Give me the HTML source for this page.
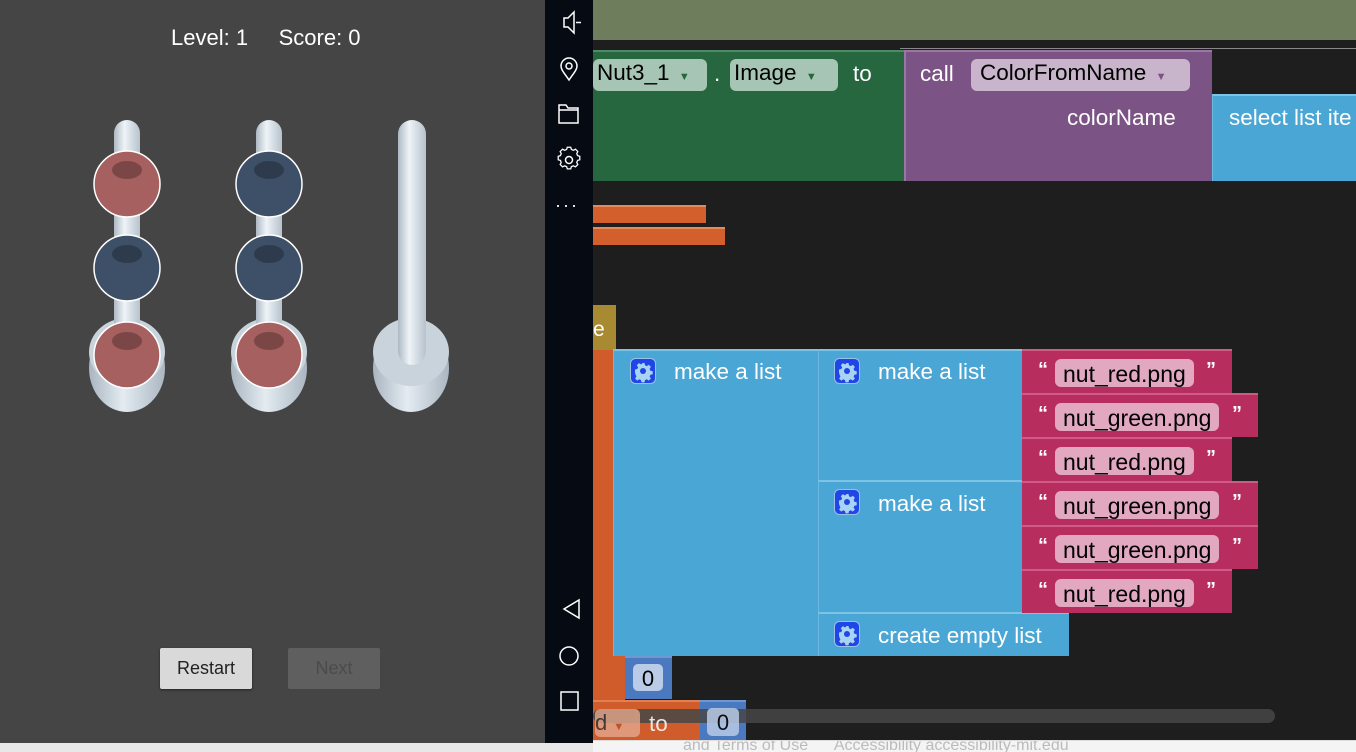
<!DOCTYPE html>
<html><head><meta charset="utf-8"><style>
*{margin:0;padding:0;box-sizing:border-box}
body{width:1356px;height:752px;overflow:hidden;background:#1e1e1e;font-family:"Liberation Sans",Arial,sans-serif;position:relative}
.a{position:absolute}
.t{color:#fff;font-size:22.5px;white-space:nowrap}
.dd{position:absolute;border-radius:6px;color:#000;font-size:22.5px;padding-left:4px;line-height:28px;white-space:nowrap}
.blue{background:#4aa6d5;border-top:2px solid #7cc3e6;border-left:1px solid #6bb8e0}
.pink{background:#b72d5e;border-top:2px solid #cf5a85}
.pin{position:absolute;left:33px;top:8px;height:28px;background:#e1a8bf;border-radius:6px;font-size:23px;line-height:30px;padding:0 8px;color:#000;white-space:nowrap}
.q{position:absolute;color:#fff;font-size:20px;top:8px;font-weight:bold}
.gear{position:absolute;width:26px;height:26px}
</style></head><body>
<svg width="0" height="0" style="position:absolute"><defs>
<symbol id="g" viewBox="0 0 26 26"><rect x=".5" y=".5" width="25" height="25" rx="5" fill="#1f46e6" stroke="#9cc0e8"/>
<path d="M11.5 5h3l.5 2.3 1.8.8 2-1.3 2.1 2.1-1.3 2 .8 1.8 2.3.5v3l-2.3.5-.8 1.8 1.3 2-2.1 2.1-2-1.3-1.8.8-.5 2.3h-3l-.5-2.3-1.8-.8-2 1.3-2.1-2.1 1.3-2-.8-1.8L5 14.5v-3l2.3-.5.8-1.8-1.3-2 2.1-2.1 2 1.3 1.8-.8z" fill="#a9d3f2"/><circle cx="13" cy="13" r="3" fill="#1f46e6"/></symbol>
</defs></svg>
<!-- left panel -->
<div class="a" style="left:0;top:0;width:545px;height:752px;background:#454545"></div>
<div class="a t" style="left:171px;top:25px;font-size:22px">Level: 1&nbsp;&nbsp;&nbsp;&nbsp;&nbsp;Score: 0</div>
<svg class="a" style="left:0;top:0" width="545" height="460">
<defs>
<linearGradient id="rod" x1="0" x2="1"><stop offset="0" stop-color="#aeb8c4"/><stop offset=".4" stop-color="#eef4f8"/><stop offset="1" stop-color="#b7c2cc"/></linearGradient>
<linearGradient id="base" x1="0" x2="1"><stop offset="0" stop-color="#a9b5c0"/><stop offset=".45" stop-color="#e4ecf2"/><stop offset="1" stop-color="#aab6c1"/></linearGradient>
</defs>
<g>
<ellipse cx="127" cy="368" rx="38" ry="44" fill="url(#base)"/>
<ellipse cx="127" cy="352" rx="38" ry="34" fill="#c9d3dc"/>
<rect x="114" y="120" width="26" height="230" rx="13" fill="url(#rod)"/>
</g>
<g>
<ellipse cx="269" cy="368" rx="38" ry="44" fill="url(#base)"/>
<ellipse cx="269" cy="352" rx="38" ry="34" fill="#c9d3dc"/>
<rect x="256" y="120" width="26" height="230" rx="13" fill="url(#rod)"/>
</g>
<g>
<ellipse cx="411" cy="368" rx="38" ry="44" fill="url(#base)"/>
<ellipse cx="411" cy="352" rx="38" ry="34" fill="#c9d3dc"/>
<rect x="398" y="120" width="28" height="245" rx="14" fill="url(#rod)"/>
</g>
<g stroke="#fff" stroke-width="1.5">
<circle cx="127" cy="184" r="33" fill="#a5605f"/>
<circle cx="127" cy="268" r="33" fill="#3d5068"/>
<circle cx="127" cy="355" r="33" fill="#a5605f"/>
<circle cx="269" cy="184" r="33" fill="#3d5068"/>
<circle cx="269" cy="268" r="33" fill="#3d5068"/>
<circle cx="269" cy="355" r="33" fill="#a5605f"/>
</g>
<g fill="#000" opacity=".25">
<ellipse cx="127" cy="170" rx="15" ry="9"/><ellipse cx="127" cy="254" rx="15" ry="9"/><ellipse cx="127" cy="341" rx="15" ry="9"/>
<ellipse cx="269" cy="170" rx="15" ry="9"/><ellipse cx="269" cy="254" rx="15" ry="9"/><ellipse cx="269" cy="341" rx="15" ry="9"/>
</g>
</svg>
<div class="a" style="left:160px;top:648px;width:92px;height:41px;background:#d8d9d8;border-radius:2px;box-shadow:0 1px 2px #222;font-size:18px;line-height:41px;text-align:center;color:#222">Restart</div>
<div class="a" style="left:288px;top:648px;width:92px;height:41px;background:#5f5f5f;border-radius:2px;font-size:18px;line-height:41px;text-align:center;color:#4b4b4b">Next</div>

<!-- workspace -->
<div class="a" style="left:593px;top:0;width:763px;height:40px;background:#6e7d5b"></div>
<div class="a" style="left:900px;top:48px;width:456px;height:1px;background:#888"></div>
<div class="a" style="left:593px;top:50px;width:312px;height:131px;background:#266740;border-top:2px solid #4f8a66"></div>
<div class="dd" style="left:593px;top:59px;width:114px;background:#a6c5b4">Nut3_1 <span style="font-size:11px;color:#266740">&nbsp;▼</span></div>
<div class="a t" style="left:714px;top:61px">.</div>
<div class="dd" style="left:730px;top:59px;width:108px;background:#a6c5b4">Image <span style="font-size:11px;color:#266740">&nbsp;▼</span></div>
<div class="a t" style="left:853px;top:61px">to</div>
<div class="a" style="left:904px;top:50px;width:308px;height:131px;background:#7b5385;border-top:2px solid #9a76a3;border-left:2px solid #9a76a3"></div>
<div class="a t" style="left:920px;top:61px">call</div>
<div class="dd" style="left:971px;top:59px;width:219px;background:#c8b4cb;padding-left:9px">ColorFromName <span style="font-size:11px;color:#7b5385">&nbsp;▼</span></div>
<div class="a t" style="left:1067px;top:105px">colorName</div>
<div class="a blue" style="left:1212px;top:94px;width:144px;height:87px"></div>
<div class="a t" style="left:1229px;top:105px">select list ite</div>
<div class="a" style="left:593px;top:205px;width:113px;height:18px;background:#d35f2c;border-top:2px solid #e58a5f"></div>
<div class="a" style="left:593px;top:227px;width:132px;height:18px;background:#d35f2c;border-top:2px solid #e58a5f"></div>
<div class="a" style="left:593px;top:305px;width:23px;height:46px;background:#a88a33;color:#fff;font-size:21px;line-height:50px">e</div>
<div class="a" style="left:593px;top:350px;width:21px;height:310px;background:#cf5c2a"></div>
<div class="a blue" style="left:613px;top:349px;width:206px;height:307px"></div>
<svg class="gear" style="left:630px;top:358px"><use href="#g"/></svg>
<div class="a t" style="left:674px;top:359px">make a list</div>
<div class="a blue" style="left:818px;top:349px;width:205px;height:132px"></div>
<svg class="gear" style="left:834px;top:358px"><use href="#g"/></svg>
<div class="a t" style="left:878px;top:359px">make a list</div>
<div class="a blue" style="left:818px;top:480px;width:205px;height:133px"></div>
<svg class="gear" style="left:834px;top:489px"><use href="#g"/></svg>
<div class="a t" style="left:878px;top:491px">make a list</div>
<div class="a blue" style="left:818px;top:612px;width:251px;height:44px"></div>
<svg class="gear" style="left:834px;top:621px"><use href="#g"/></svg>
<div class="a t" style="left:878px;top:623px">create empty list</div>
<div class="a pink" style="left:1022px;top:349px;width:210px;height:44px"><span class="q" style="left:16px">“</span><span class="pin">nut_red.png</span><span class="q" style="left:184px">”</span></div>
<div class="a pink" style="left:1022px;top:393px;width:236px;height:44px"><span class="q" style="left:16px">“</span><span class="pin">nut_green.png</span><span class="q" style="left:210px">”</span></div>
<div class="a pink" style="left:1022px;top:437px;width:210px;height:44px"><span class="q" style="left:16px">“</span><span class="pin">nut_red.png</span><span class="q" style="left:184px">”</span></div>
<div class="a pink" style="left:1022px;top:481px;width:236px;height:44px"><span class="q" style="left:16px">“</span><span class="pin">nut_green.png</span><span class="q" style="left:210px">”</span></div>
<div class="a pink" style="left:1022px;top:525px;width:236px;height:44px"><span class="q" style="left:16px">“</span><span class="pin">nut_green.png</span><span class="q" style="left:210px">”</span></div>
<div class="a pink" style="left:1022px;top:569px;width:210px;height:44px"><span class="q" style="left:16px">“</span><span class="pin">nut_red.png</span><span class="q" style="left:184px">”</span></div>
<div class="a" style="left:593px;top:656px;width:32px;height:44px;background:#cf5c2a"></div>
<div class="a" style="left:625px;top:656px;width:47px;height:43px;background:#4a79bf;border-top:2px solid #6f97d0"></div>
<div class="a" style="left:633px;top:664px;width:30px;height:27px;background:#b9cbe6;border-radius:5px;font-size:22px;text-align:center;line-height:29px">0</div>
<div class="a" style="left:593px;top:700px;width:110px;height:40px;background:#cf5c2a;border-top:2px solid #e08055"></div>
<div class="a" style="left:700px;top:700px;width:46px;height:40px;background:#4a79bf;border-top:2px solid #6f97d0"></div>
<div class="a" style="left:593px;top:709px;width:682px;height:14px;background:#474747;border-radius:7px;opacity:.85"></div>
<div class="a" style="left:595px;top:709px;width:45px;height:28px;background:#e3a88d;border-radius:5px;opacity:.8;font-size:22px;line-height:28px;color:#333">d <span style="font-size:11px;color:#b5532b">▼</span></div>
<div class="a t" style="left:649px;top:711px;opacity:.85">to</div>
<div class="a" style="left:707px;top:708px;width:32px;height:28px;background:#b9cbe6;border-radius:5px;font-size:22px;text-align:center;line-height:30px;opacity:.85">0</div>
<div class="a" style="left:593px;top:740px;width:763px;height:12px;background:#f4f4f4;border-top:1px solid #ddd;overflow:hidden"><span style="position:absolute;left:90px;top:-4px;color:#bbb;font-size:16px;white-space:nowrap">and Terms of Use &nbsp;&nbsp;&nbsp;&nbsp; Accessibility accessibility-mit.edu</span></div>

<!-- nav bar -->
<div class="a" style="left:545px;top:0;width:48px;height:743px;background:#060a12"></div>
<svg class="a" style="left:545px;top:0" width="48" height="743" fill="none" stroke="#fff" stroke-width="1.5">
<path d="M19 18h4l6-6v21l-6-6h-4z"/><path d="M31 22.5h5"/>
<path d="M24 80c-4-6-8-10-8-14a8 8 0 0 1 16 0c0 4-4 8-8 14z"/><circle cx="24" cy="66" r="3"/>
<path d="M14 105h7l2 3h10v15H14z M14 110h19"/>
<circle cx="24" cy="160" r="3.5"/><path d="M22 150h4l.8 2.6 2.4 1 2.4-1.3 2.8 2.8-1.3 2.4 1 2.4 2.6.8v4l-2.6.8-1 2.4 1.3 2.4-2.8 2.8-2.4-1.3-2.4 1-.8 2.6h-4l-.8-2.6-2.4-1-2.4 1.3-2.8-2.8 1.3-2.4-1-2.4-2.6-.8v-4l2.6-.8 1-2.4-1.3-2.4 2.8-2.8 2.4 1.3 2.4-1z" transform="translate(24 160) scale(.85) translate(-24 -165)"/>
<path d="M34 600v18l-15-9z"/>
<circle cx="24" cy="656" r="9"/>
<rect x="16" y="692" width="17" height="18"/>
</svg>
<div class="a" style="left:555px;top:195px;color:#fff;font-size:18px;letter-spacing:2px">···</div>
<div class="a" style="left:0;top:743px;width:593px;height:9px;background:#e8e8e8"></div>
</body></html>
